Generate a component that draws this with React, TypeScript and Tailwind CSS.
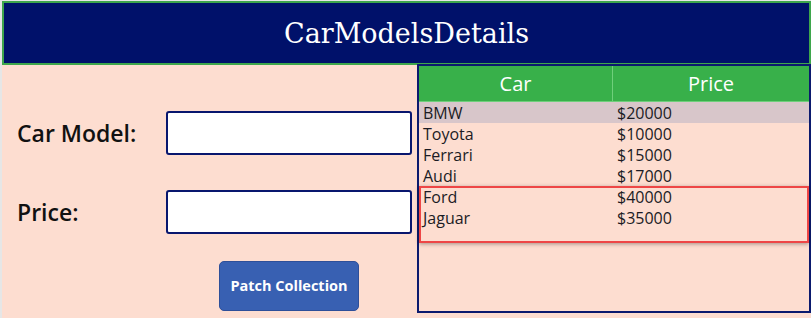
import React from "react";

const cars = [
  { name: "BMW", price: "$20000" },
  { name: "Toyota", price: "$10000" },
  { name: "Ferrari", price: "$15000" },
  { name: "Audi", price: "$17000" },
  { name: "Ford", price: "$40000" },
  { name: "Jaguar", price: "$35000" },
];

const App: React.FC = () => {
  return (
    <div className="w-[811px] h-[318px] bg-[#e6e6e6] pl-[2px] pt-[1px] overflow-hidden font-['Open_Sans',sans-serif]">
      <div className="h-full bg-[#fdddd0] flex flex-col">
        {/* title bar */}
        <div className="h-[64px] shrink-0 bg-[#00116a] border-2 border-[#3ea64c] flex items-center justify-center">
          <h1 className="text-white text-[27px] font-['DejaVu_Serif',serif] leading-none">
            CarModelsDetails
          </h1>
        </div>

        <div className="flex flex-1 min-h-0">
          {/* form */}
          <div className="w-[415px] shrink-0 flex flex-col pl-[15px] pt-[46px]">
            <div className="flex items-center h-[44px]">
              <label className="w-[149px] text-[23px] font-semibold text-[#111]">Car Model:</label>
              <input
                type="text"
                className="w-[246px] h-[44px] bg-white border-2 border-[#08166e] rounded-[3px] outline-none"
              />
            </div>
            <div className="flex items-center h-[44px] mt-[35px]">
              <label className="w-[149px] text-[23px] font-semibold text-[#111]">Price:</label>
              <input
                type="text"
                className="w-[246px] h-[44px] bg-white border-2 border-[#08166e] rounded-[3px] outline-none"
              />
            </div>
            <div className="flex mt-[27px] pl-[202px]">
              <button className="w-[140px] h-[50px] rounded-[5px] bg-[#3860b2] border border-[#2e4f99] text-white text-[14.5px] font-bold">
                Patch Collection
              </button>
            </div>
          </div>

          {/* gallery */}
          <div className="relative flex-1 h-[249px] -mt-[1px] border-2 border-[#0b1a6e] flex flex-col text-[16px] text-[#1b1b24]">
            <div className="flex h-[36px] bg-[#38b04a] text-white text-[20px] border-b border-[#6fcf7b]">
              <div className="w-[194px] flex items-center justify-center border-r border-[#6fcf7b]">Car</div>
              <div className="flex-1 flex items-center justify-center">Price</div>
            </div>
            {cars.map((car, i) => (
              <div
                key={car.name}
                className={`flex h-[21px] items-center leading-none ${i === 0 ? "bg-[#d8c6ca]" : ""}`}
              >
                <div className="w-[198px] pl-[4px]">{car.name}</div>
                <div className="flex-1">{car.price}</div>
              </div>
            ))}

            {/* red highlight box */}
            <div className="absolute left-0 top-[120px] w-[390px] h-[57px] border-2 border-[#ee4646] shadow-[0_1px_4px_rgba(0,0,0,0.35)]" />
          </div>
        </div>
      </div>
    </div>
  );
};

export default App;
